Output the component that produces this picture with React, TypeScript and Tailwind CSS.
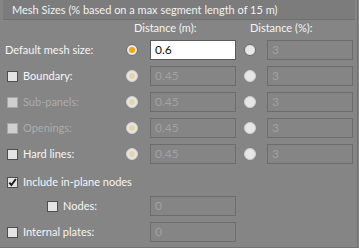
import React from 'react';

const font = { fontFamily: 'Lato, "Noto Sans", sans-serif' }

type Row = {
  label: string
  check?: boolean
  disabled?: boolean
  primary?: boolean
  v1: string
  v2: string
}

const ROWS: Row[] = [
  { label: 'Default mesh size:', primary: true, v1: '0.6', v2: '3' },
  { label: 'Boundary:', check: true, v1: '0.45', v2: '3' },
  { label: 'Sub-panels:', check: true, disabled: true, v1: '0.45', v2: '3' },
  { label: 'Openings:', check: true, disabled: true, v1: '0.45', v2: '3' },
  { label: 'Hard lines:', check: true, v1: '0.45', v2: '3' },
]

const Checkbox = ({ checked, disabled }: { checked?: boolean; disabled?: boolean }) => (
  <div
    className={`w-[11px] h-[11px] shrink-0 border flex items-center justify-center ${
      disabled ? 'border-[#a6a6a6] bg-[#cfcfcf]' : 'border-[#4e4e4e] bg-[#e4e4e4]'
    }`}
  >
    {checked && (
      <svg width="9" height="9" viewBox="0 0 9 9">
        <path d="M1.3 4.6 L3.4 7 L7.9 1" stroke="#1c1c1c" strokeWidth="2" fill="none" />
      </svg>
    )}
  </div>
)

const Radio = ({ on, disabled }: { on?: boolean; disabled?: boolean }) => (
  <div
    className={`w-[12px] h-[12px] rounded-full shrink-0 flex items-center justify-center border ${
      disabled ? 'border-[#cfcfcf] bg-[#e6e6e6]' : 'border-[#6a6a6a] bg-[#e8e8e8]'
    }`}
  >
    {on && (
      <div className={`w-[6px] h-[6px] rounded-full ${disabled ? 'bg-[#e6d4a4]' : 'bg-[#f2a70c]'}`} />
    )}
  </div>
)

const Field = ({ value, active }: { value: string; active?: boolean }) => (
  <div
    className={`h-[20px] flex items-center px-[4px] text-[12px] border ${
      active ? 'bg-white border-[#5a5a5a] text-[#101010]' : 'border-[#6c6c6c] text-[#a2a2a2]'
    }`}
  >
    {value}
  </div>
)

export default function App() {
  return (
    <div className="w-[359px] h-[248px] bg-[#858585] overflow-hidden" style={font}>
      <div className="w-[358px] h-[248px] border-r border-b border-[#717171] flex flex-col">
        {/* Header */}
        <div className="h-[20px] mx-[3px] mr-[2px] pt-[2px] bg-[#7c7c7c] border-b border-[#6f6f6f] flex items-center pl-[9px] text-[11px] text-[#f2f2f2]">
          Mesh Sizes (% based on a max segment length of 15 m)
        </div>

        {/* Column headers */}
        <div className="h-[17px] flex items-center text-[11px] text-[#f4f4f4]">
          <div className="w-[134px]" />
          <div className="w-[116px]">Distance (m):</div>
          <div>Distance (%):</div>
        </div>

        {ROWS.map(r => (
          <div key={r.label} className="h-[26px] flex items-center text-[11px]">
            <div className="w-[126px] flex items-center pl-[7px]">
              {r.check && <Checkbox disabled={r.disabled} />}
              <span
                className={`${r.check ? 'ml-[5px]' : 'ml-[-2px]'} ${
                  r.disabled ? 'text-[#acacac]' : 'text-[#f6f6f6]'
                }`}
              >
                {r.label}
              </span>
            </div>
            <Radio on disabled={!r.primary} />
            <div className="w-[86px] ml-[12px]">
              <Field value={r.v1} active={r.primary} />
            </div>
            <div className="ml-[8px]">
              <Radio disabled={!r.primary} />
            </div>
            <div className="w-[86px] ml-[11px]">
              <Field value={r.v2} />
            </div>
          </div>
        ))}

        {/* Include in-plane nodes */}
        <div className="h-[26px] mt-[2px] flex items-center pl-[7px] text-[11px] text-[#f6f6f6]">
          <Checkbox checked />
          <span className="ml-[5px]">Include in-plane nodes</span>
        </div>

        <div className="h-[22px] flex items-center text-[11px]">
          <div className="w-[150px] flex items-center pl-[47px] text-[#f6f6f6]">
            <Checkbox />
            <span className="ml-[5px]">Nodes:</span>
          </div>
          <div className="w-[86px]">
            <Field value="0" />
          </div>
        </div>

        <div className="h-[26px] mt-[2px] flex items-center text-[11px]">
          <div className="w-[150px] flex items-center pl-[7px] text-[#f6f6f6]">
            <Checkbox />
            <span className="ml-[5px]">Internal plates:</span>
          </div>
          <div className="w-[86px]">
            <Field value="0" />
          </div>
        </div>
      </div>
    </div>
  )
}
